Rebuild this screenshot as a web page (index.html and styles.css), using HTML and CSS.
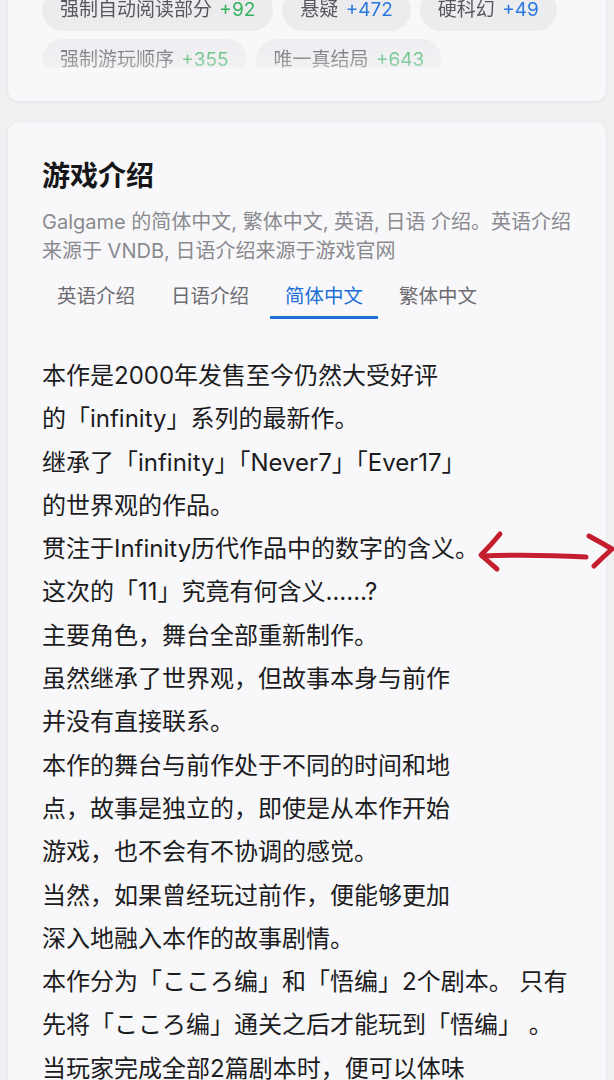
FILE: index.html
```html
<!DOCTYPE html>
<html lang="zh-CN">
<head>
  <meta charset="UTF-8" />
  <meta name="viewport" content="width=device-width, initial-scale=1.0"/>
  <title>游戏介绍</title>
  <link rel="stylesheet" href="styles.css">
</head>
<body>

  <div class="page">
    <!-- tag card, scrolled partly out of view -->
    <div class="card tags-card">
      <div class="tags">
        <span class="tag">强制自动阅读部分 <b class="up">+92</b></span>
        <span class="tag">悬疑 <b class="hot">+472</b></span>
        <span class="tag">硬科幻 <b class="hot">+49</b></span>
        <span class="tag">强制游玩顺序 <b class="up">+355</b></span>
        <span class="tag">唯一真结局 <b class="up">+643</b></span>
      </div>
    </div>

    <div class="card intro-card">
      <h2>游戏介绍</h2>
      <p class="desc">Galgame 的简体中文, 繁体中文, 英语, 日语 介绍。英语介绍来源于 VNDB, 日语介绍来源于游戏官网</p>

      <div class="tabs">
        <span class="tab">英语介绍</span>
        <span class="tab">日语介绍</span>
        <span class="tab active">简体中文</span>
        <span class="tab">繁体中文</span>
      </div>

      <p class="intro-text">本作是2000年发售至今仍然大受好评<br>的「infinity」系列的最新作。<br>继承了「infinity」「Never7」「Ever17」<br>的世界观的作品。<br>贯注于Infinity历代作品中的数字的含义。<br>这次的「11」究竟有何含义……?<br>主要角色，舞台全部重新制作。<br>虽然继承了世界观，但故事本身与前作<br>并没有直接联系。<br>本作的舞台与前作处于不同的时间和地<br>点，故事是独立的，即使是从本作开始<br>游戏，也不会有不协调的感觉。<br>当然，如果曾经玩过前作，便能够更加<br>深入地融入本作的故事剧情。<br>本作分为「こころ编」和「悟编」2个剧本。 只有<br>先将「こころ编」通关之后才能玩到「悟编」 。<br>当玩家完成全部2篇剧本时，便可以体味<br>到本作真正的结局。</p>

      <!-- hand drawn annotation -->
      <svg class="mark" width="140" height="44" viewBox="0 0 140 44">
        <path d="M20 4 Q12 14 1 25 Q10 33 17 39" />
        <path d="M2 26 Q50 24 106 27" />
        <path d="M109 6 Q122 13 132 19 Q122 28 114 36" />
      </svg>
    </div>
  </div>

</body>
</html>
```

FILE: styles.css
```css
body {
  margin: 0;
  background: #f0f0f3;
  font-family: "Inter", "Noto Sans CJK SC", sans-serif;
  color: #1c1c1e;
}

.page {
  padding: 0 7px;
}

.card {
  background: #f8f8fa;
  border: 1px solid #ebebef;
  border-radius: 12px;
  box-shadow: 0 1px 2px rgba(0, 0, 0, 0.03);
  padding: 0 34px;
}

.tags-card {
  margin-top: -42px;
  padding-top: 30px;
  padding-bottom: 33px;
}

.tags {
  display: flex;
  flex-wrap: wrap;
  gap: 8px 9px;
  height: 79px;
  overflow: hidden;
  -webkit-mask-image: linear-gradient(to bottom, #000 55%, rgba(0, 0, 0, 0.5) 100%);
  mask-image: linear-gradient(to bottom, #000 55%, rgba(0, 0, 0, 0.5) 100%);
}

.tag {
  background: #ececef;
  color: #58585c;
  font-size: 19px;
  line-height: 26px;
  padding: 8px 18px;
  border-radius: 21px;
  white-space: nowrap;
}

.tag b {
  font-weight: 400;
  margin-left: 2px;
}

.tag .up {
  color: #36b15e;
}

.tag .hot {
  color: #2b78df;
}

.intro-card {
  position: relative;
  margin-top: 19px;
  padding-top: 36px;
  padding-bottom: 40px;
}

.intro-card h2 {
  margin: 0;
  font-size: 28px;
  line-height: 36px;
  font-weight: 600;
  color: #161618;
}

.desc {
  margin: 14px 0 0;
  font-size: 20px;
  line-height: 29px;
  color: #8a8a8f;
}

.tabs {
  display: flex;
  gap: 6px;
  margin-top: 16px;
}

.tab {
  font-size: 19.5px;
  line-height: 28px;
  padding: 0 15px 6px;
  color: #6c6c71;
  border-bottom: 3px solid transparent;
}

.tab.active {
  color: #1d6fd8;
  border-bottom-color: #1d6fd8;
}

.intro-text {
  margin: 35px 0 0;
  font-size: 24px;
  line-height: 43.3px;
  white-space: nowrap;
  color: #1c1c1e;
}

.mark {
  position: absolute;
  left: 472px;
  top: 408px;
  overflow: visible;
}

.mark path {
  fill: none;
  stroke: #c51f2f;
  stroke-width: 5;
  stroke-linecap: round;
  stroke-linejoin: round;
}
```
